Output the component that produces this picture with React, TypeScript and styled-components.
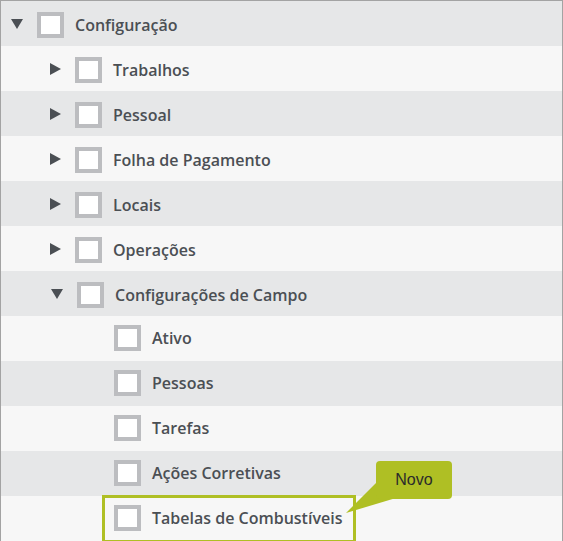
import React from "react";
import styled, { createGlobalStyle } from "styled-components";

const GlobalStyle = createGlobalStyle`
  html, body {
    margin: 0;
    padding: 0;
    background: #ffffff;
  }
  body {
    font-family: "Open Sans", "Liberation Sans", sans-serif;
  }
`;

type Node = {
  label: string;
  level: number;
  caret?: "open" | "closed";
  shift?: number;
  isNew?: boolean;
};

const nodes: Node[] = [
  { label: "Configuração", level: 0, caret: "open" },
  { label: "Trabalhos", level: 1, caret: "closed" },
  { label: "Pessoal", level: 1, caret: "closed" },
  { label: "Folha de Pagamento", level: 1, caret: "closed" },
  { label: "Locais", level: 1, caret: "closed" },
  { label: "Operações", level: 1, caret: "closed" },
  { label: "Configurações de Campo", level: 1, caret: "open", shift: 2 },
  { label: "Ativo", level: 2, shift: 1 },
  { label: "Pessoas", level: 2, shift: 1 },
  { label: "Tarefas", level: 2, shift: 1 },
  { label: "Ações Corretivas", level: 2, shift: 1 },
  { label: "Tabelas de Combustíveis", level: 2, shift: 1, isNew: true },
];

const App = () => {
  return (
    <>
      <GlobalStyle />
      <Tree>
        {nodes.map((n, i) => (
          <Row
            key={n.label}
            $dark={i % 2 === 0}
            $level={n.level}
            $shift={n.shift || 0}
          >
            <CaretSlot>
              {n.caret === "open" && <CaretDown />}
              {n.caret === "closed" && <CaretRight />}
            </CaretSlot>
            <Box />
            <Label>{n.label}</Label>
            {n.isNew && <Highlight />}
          </Row>
        ))}
        <Callout>
          <Pointer width="60" height="60" viewBox="0 0 60 60">
            <polygon points="33,21 52,37 2,52" fill="#afbf24" />
          </Pointer>
          <Bubble>Novo</Bubble>
        </Callout>
      </Tree>
    </>
  );
};

export default App;

const Tree = styled.div`
  position: relative;
  width: 561px;
  height: 540px;
  border: 1px solid #a3a3a3;
  border-bottom: none;
  overflow: hidden;
`;

const Row = styled.div<{ $dark: boolean; $level: number; $shift: number }>`
  position: relative;
  box-sizing: border-box;
  height: 45px;
  display: flex;
  align-items: center;
  padding-top: ${({ $level }) => ($level < 2 ? 2 : 0)}px;
  padding-bottom: ${({ $level }) => ($level < 2 ? 0 : 1)}px;
  padding-left: ${({ $level, $shift }) => 10 + $level * 38 + $shift}px;
  background: ${({ $dark }) => ($dark ? "#e6e7e8" : "#f7f7f7")};
`;

const CaretSlot = styled.span`
  width: 26px;
  height: 14px;
  display: flex;
  align-items: center;
`;

const CaretDown = styled.span`
  width: 0;
  height: 0;
  border-left: 6px solid transparent;
  border-right: 6px solid transparent;
  border-top: 10px solid #4b4f54;
  margin-top: -2px;
`;

const CaretRight = styled.span`
  width: 0;
  height: 0;
  margin-left: 1px;
  border-top: 6px solid transparent;
  border-bottom: 6px solid transparent;
  border-left: 11px solid #4b4f54;
  margin-top: -2px;
`;

const Box = styled.span`
  box-sizing: border-box;
  width: 27px;
  height: 26px;
  background: #ffffff;
  border: 4px solid #bcbdc0;
  flex-shrink: 0;
`;

const Label = styled.span`
  margin-left: 11px;
  font-family: "Open Sans", "Liberation Sans", sans-serif;
  font-weight: 600;
  font-size: 16px;
  color: #4b4f54;
  white-space: nowrap;
`;

const Highlight = styled.span`
  position: absolute;
  left: 101px;
  top: -1px;
  width: 254px;
  height: 48px;
  box-sizing: border-box;
  border: 3px solid #afbf24;
  pointer-events: none;
`;

const Callout = styled.div`
  position: absolute;
  left: 343px;
  top: 460px;
  width: 110px;
  height: 60px;
`;

const Pointer = styled.svg`
  position: absolute;
  left: 0;
  top: 0;
`;

const Bubble = styled.div`
  position: absolute;
  left: 32px;
  top: 0;
  width: 76px;
  height: 38px;
  border-radius: 4px;
  background: #afbf24;
  color: #2b2b2b;
  font-family: "Liberation Sans", Arial, sans-serif;
  font-size: 16px;
  display: flex;
  align-items: center;
  justify-content: center;
`;
